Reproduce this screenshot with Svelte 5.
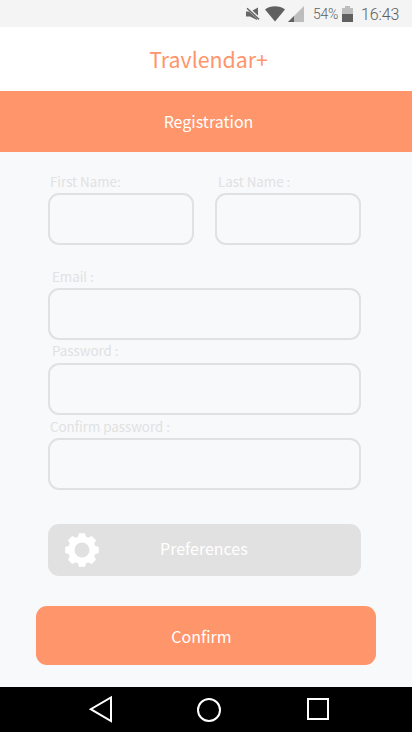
<script>
  const battery = '54%';
  const time = '16:43';
</script>

<div class="screen">
  <div class="status">
    <svg class="mute" width="14" height="14" viewBox="0 0 14 14">
      <path d="M0 4.6h4L11 10v3L4 9.6H0z" fill="#666" />
      <path d="M5 4.6L12 .4v8.8z" fill="#666" />
      <path d="M1.4 .9L13.4 12" stroke="#f4f4f4" stroke-width="3" />
      <path d="M1 1.2L13 12.4" stroke="#666" stroke-width="1.5" />
    </svg>
    <svg class="wifi" width="20" height="16" viewBox="0 0 20 16">
      <path d="M0 3.4C5.5-.9 14.5-.9 20 3.4L10 15.6z" fill="#606060" />
    </svg>
    <svg class="signal" width="16" height="16" viewBox="0 0 16 16">
      <path d="M16 0v16H0z" fill="#bdbdbd" />
      <path d="M6 10v6H0z" fill="#606060" />
    </svg>
    <span class="pct">{battery}</span>
    <svg class="battery" width="11" height="16" viewBox="0 0 11 16">
      <path d="M3 0h5v2h3v6H0V2h3z" fill="#bdbdbd" />
      <path d="M0 8h11v8H0z" fill="#606060" />
    </svg>
    <span class="time">{time}</span>
  </div>

  <header>Travlendar+</header>
  <h1>Registration</h1>

  <form onsubmit={(e) => e.preventDefault()}>
    <div class="row">
      <label class="field"><span class="near">First Name:</span><input type="text" /></label>
      <label class="field"><span class="mid">Last Name :</span><input type="text" /></label>
    </div>
    <label class="field email"><span>Email :</span><input type="text" /></label>
    <label class="field password"><span>Password :</span><input type="password" /></label>
    <label class="field"><span class="near">Confirm password :</span><input type="password" /></label>
    <button type="button" class="prefs">
      <svg width="34" height="34" viewBox="-17 -17 34 34">
        <g fill="#fff">
          {#each [0, 45, 90, 135] as angle}
            <path d="M-4.2-13L-3-16.8H3L4.2-13V13L3 16.8H-3L-4.2 13z" transform="rotate({angle})" />
          {/each}
          <circle r="13.8" />
        </g>
        <circle r="7.5" fill="#e1e1e1" />
      </svg>
      <span>Preferences</span>
    </button>
    <button type="submit" class="confirm">Confirm</button>
  </form>

  <nav>
    <svg width="412" height="45" viewBox="0 0 412 45" fill="none" stroke="#fff" stroke-width="2">
      <path d="M111 10.5v23.5L90.8 22.2z" />
      <circle cx="209" cy="23" r="11" />
      <path d="M308 12h20v20h-20z" />
    </svg>
  </nav>
</div>

<style>
  .screen {
    width: 412px;
    height: 732px;
    display: flex;
    flex-direction: column;
    overflow: hidden;
    background: #f8f9fb;
    font-family: "Noto Sans CJK SC", "Noto Sans", sans-serif;
  }
  .status {
    height: 27px;
    flex: none;
    box-sizing: border-box;
    display: flex;
    align-items: center;
    justify-content: flex-end;
    padding: 1px 12px 0 0;
    background: #f4f4f4;
    color: #606060;
    font-family: Roboto, sans-serif;
    white-space: nowrap;
  }
  .mute { margin-right: 5px; }
  .wifi { margin-right: 3px; }
  .signal { margin-right: 9px; }
  .pct { width: 25px; margin-right: 4px; font-size: 14px; font-weight: 300; letter-spacing: -.3px; }
  .battery { margin-right: 8px; }
  .time { width: 39px; font-size: 16px; font-weight: 300; letter-spacing: -.1px; padding-top: 1px; }
  header {
    height: 64px;
    flex: none;
    background: #fff;
    color: #ff956a;
    font-size: 21.33px;
    line-height: 64px;
    text-align: center;
    padding-left: 5px;
  }
  h1 {
    margin: 0;
    height: 61px;
    flex: none;
    background: #ff956a;
    color: #fff;
    font-size: 16px;
    line-height: 61px;
    font-weight: 400;
    text-align: center;
    padding-left: 5px;
  }
  form {
    height: 535px;
    flex: none;
    box-sizing: border-box;
    display: flex;
    flex-direction: column;
    padding: 21px 51px 0 48px;
  }
  .row { display: flex; gap: 21px; margin-bottom: 23px; }
  .field {
    display: flex;
    flex-direction: column;
    flex: none;
    color: #e1e1e1;
    font-size: 13.33px;
  }
  .row .field { flex: 1; }
  .field span { height: 20px; line-height: 18px; padding-left: 4px; white-space: nowrap; }
  .field span.near { padding-left: 2px; }
  .field span.mid { padding-left: 3px; }
  .field.password { margin: 2px 0 3px; }
  .field.password span { height: 21px; }
  input {
    width: 100%;
    height: 52px;
    box-sizing: border-box;
    border: 2px solid #e1e1e1;
    border-radius: 11px;
    background: transparent;
    padding: 0 12px;
    outline: none;
    font: inherit;
    color: #888;
  }
  button {
    flex: none;
    border: 0;
    color: #fff;
    font: inherit;
    font-size: 16px;
    display: flex;
    align-items: center;
  }
  .prefs {
    height: 52px;
    margin-top: 34px;
    border-radius: 11px;
    background: #e1e1e1;
    padding: 0 0 0 17px;
    gap: 61px;
  }
  .prefs span { margin-top: -5px; }
  .confirm {
    height: 59px;
    margin: 30px -15px 0 -12px;
    padding: 1px 9px 0 0;
    justify-content: center;
    border-radius: 11px;
    background: #ff956a;
  }
  nav { height: 45px; flex: none; background: #000; }
  svg { display: block; flex: none; }
</style>
